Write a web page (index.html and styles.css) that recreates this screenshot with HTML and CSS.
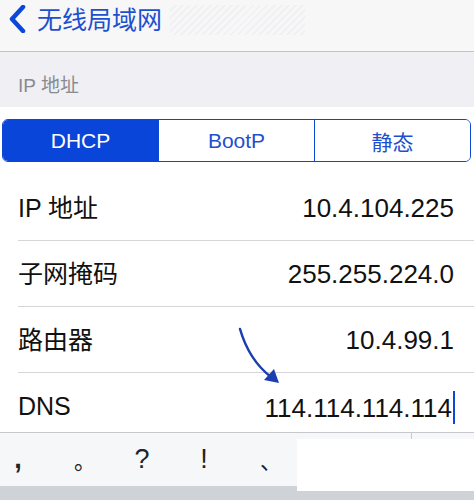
FILE: index.html
```html
<!DOCTYPE html>
<html lang="zh-CN">

<head>
    <meta charset="utf8">
    <title>无线局域网</title>

    <link rel="stylesheet" href="styles.css">
</head>

<body>
    <header class="nav">
        <svg class="back" width="18" height="28" viewBox="0 0 18 28">
            <path d="M15 2 L4 14 L15 26" fill="none" stroke="#0b47d8" stroke-width="4.5" stroke-linecap="round" stroke-linejoin="round"/>
        </svg>
        <span class="nav-title">无线局域网</span>
        <span class="nav-shade"></span>
    </header>

    <div class="section-title">IP 地址</div>

    <div class="segment-wrap">
        <div class="segmented">
            <button class="seg active">DHCP</button>
            <button class="seg">BootP</button>
            <button class="seg">静态</button>
        </div>
    </div>

    <main class="rows">
        <div class="row">
            <span class="label">IP 地址</span>
            <span class="value">10.4.104.225</span>
        </div>
        <div class="row">
            <span class="label">子网掩码</span>
            <span class="value">255.255.224.0</span>
        </div>
        <div class="row">
            <span class="label">路由器</span>
            <span class="value">10.4.99.1</span>
        </div>
        <div class="row last">
            <span class="label">DNS</span>
            <span class="value editing">114.114.114.114<i class="caret"></i></span>
        </div>

        <!-- hand-drawn pointer at the DNS field -->
        <svg class="pointer" width="474" height="500" viewBox="0 0 474 500">
            <path d="M240 329 Q 249 360 271 377" fill="none" stroke="#1b3fae" stroke-width="2.5" stroke-linecap="round"/>
            <path d="M279 383 L264 380 L274 369 Z" fill="#1b3fae"/>
        </svg>
    </main>

    <footer class="keyboard">
        <div class="keys">
            <span class="key comma">,</span>
            <span class="key stop">。</span>
            <span class="key">?</span>
            <span class="key">!</span>
            <span class="key pause">、</span>
        </div>
        <div class="candidates"></div>
    </footer>
</body>

</html>
```

FILE: styles.css
```css
* {
    box-sizing: border-box;
}

body {
    font-family: "Liberation Sans", "Noto Sans CJK SC", sans-serif;
    color: #111;
    margin: 0;
    width: 474px;
    height: 500px;
    overflow: hidden;
    display: flex;
    flex-direction: column;
    background: white;
    position: relative;
}

.nav {
    height: 52px;
    flex-shrink: 0;
    display: flex;
    align-items: flex-start;
    background: #f7f7f8;
    border-bottom: 1px solid #c4c4c6;
}

.nav .back {
    margin: 5px 0 0 8px;
}

.nav-title {
    margin-left: 11px;
    font-size: 25px;
    line-height: 36px;
    color: #1d4fd0;
    font-family: "Noto Sans CJK SC", sans-serif;
}

.nav-shade {
    width: 135px;
    height: 30px;
    margin: 5px 0 0 8px;
    background: repeating-linear-gradient(135deg, #f7f7f8 0 3px, #efeff1 3px 5px);
    opacity: 0.8;
}

.section-title {
    height: 55px;
    flex-shrink: 0;
    background: #efeff4;
    color: #8a8a8f;
    font-size: 19px;
    line-height: 20px;
    padding: 24px 0 0 18px;
}

.segment-wrap {
    height: 68px;
    flex-shrink: 0;
    padding: 12px 3px 0 2px;
}

.segmented {
    display: flex;
    height: 43px;
    border: 1.5px solid #0c47d4;
    border-radius: 6px;
    overflow: hidden;
}

.seg {
    flex: 1;
    background: white;
    border: 0 none;
    border-left: 1.5px solid #0c47d4;
    color: #1d4fd0;
    font-family: "Liberation Sans", "Noto Sans CJK SC", sans-serif;
    font-size: 21px;
    padding: 0;
}

.seg:first-child {
    border-left: 0 none;
}

.seg.active {
    background: #0a45d9;
    color: white;
}

.rows {
    flex: 1;
    overflow: hidden;
}

.row {
    display: flex;
    justify-content: space-between;
    margin-left: 18px;
    padding: 18px 20px 17px 0;
    line-height: 30px;
    font-size: 25px;
    border-bottom: 1px solid #d6d6d8;
}

.row.last {
    border-bottom: 0 none;
}

.value {
    font-size: 26px;
}

.value.editing {
    display: flex;
    align-items: center;
    margin-right: -1px;
}

.caret {
    width: 2px;
    height: 33px;
    margin-left: 1px;
    background: #0b47d8;
}

.pointer {
    position: absolute;
    top: 0;
    left: 0;
    pointer-events: none;
}

.keyboard {
    flex-shrink: 0;
    height: 68px;
    border-top: 1px solid #c8c8cc;
    background: #cfd2d7;
    position: relative;
}

.keyboard::before {
    content: " ";
    position: absolute;
    left: 411px;
    top: 0;
    height: 7px;
    border-left: 1px solid #c8c8cc;
}

.keys {
    display: flex;
    height: 53px;
    background: #f6f7f8;
    margin-left: -13px;
}

.key {
    width: 62px;
    text-align: center;
    font-size: 27px;
    line-height: 53px;
    color: #222;
}

.key.comma {
    font-weight: bold;
}

.key.stop,
.key.pause {
    font-family: "Noto Sans CJK SC", sans-serif;
    font-size: 22px;
    text-indent: 10px;
}

.candidates {
    position: absolute;
    left: 297px;
    top: 6px;
    right: 0;
    height: 52px;
    background: white;
}
```
